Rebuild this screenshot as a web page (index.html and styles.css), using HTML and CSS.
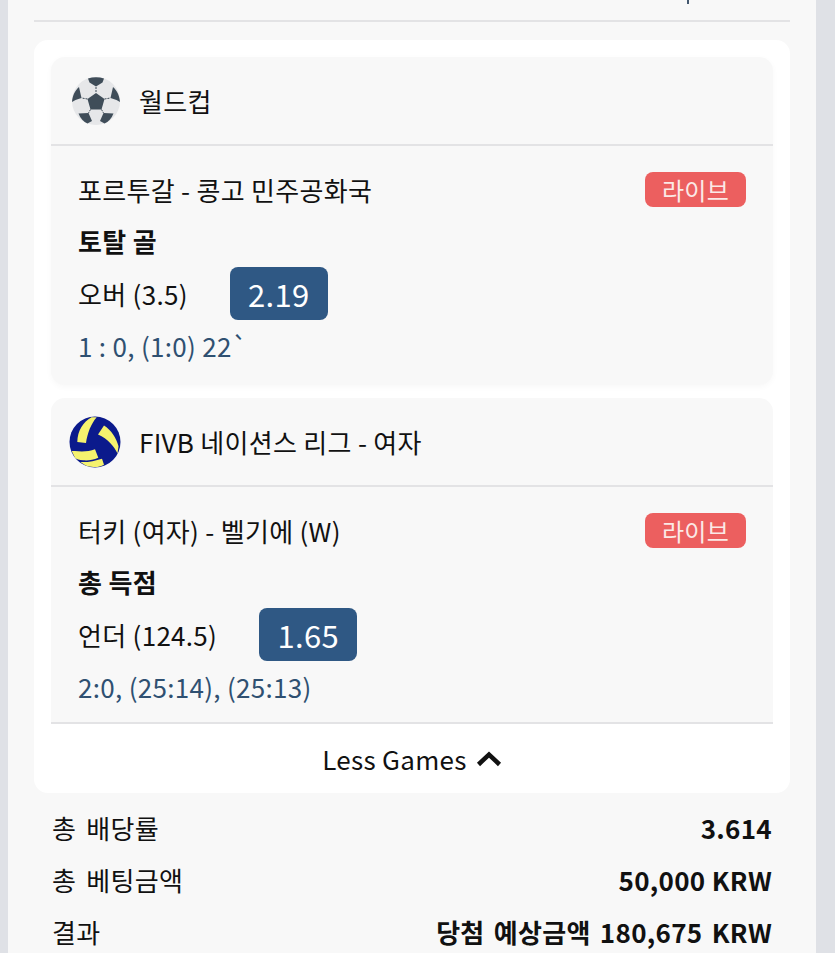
FILE: index.html
```html
<!DOCTYPE html>
<html>
<head>
  <title>Bet Slip</title>
  <link rel="stylesheet" href="styles.css">
</head>
<body>
  <div class="panel">
    <div class="topBar"><span class="topMark"></span></div>

    <div class="slipCard">
      <div class="game">
        <div class="gameHeader">
          <svg class="leagueIcon soccer" viewBox="0 0 48 48">
            <circle cx="24" cy="24" r="24" fill="#e6e7e9"/>
            <path d="M24 16 32.500 22 29.500 32.500H18.500L15.500 22Z" fill="#3f4d59"/>
            <path d="M16 1.500C21 -.2 27 -.2 32 1.500L30.500 5.500 24 9.500 17.500 5.500Z" fill="#3f4d59"/>
            <path d="M41 10C45.500 14 47.500 19 48 25L44.500 23 38.500 21Z" fill="#3f4d59"/>
            <path d="M7 10C2.500 14 .5 19 0 25L3.500 23 9.500 21Z" fill="#3f4d59"/>
            <path d="M6.500 36.500 16.500 36 20 44 15.500 46.500C11.500 45 8.500 41.500 6.500 36.500Z" fill="#3f4d59"/>
            <path d="M41.500 36.500 31.500 36 28 44 32.500 46.500C36.500 45 39.500 41.500 41.500 36.500Z" fill="#3f4d59"/>
            <path d="M24 10V16M32.500 22 38.500 21M15.500 22 9.500 21M18.500 32.500 16.500 36M29.500 32.500 31.500 36" stroke="#3f4d59" stroke-width="1" stroke-dasharray="2 1" fill="none"/>
          </svg>
          <span class="leagueName">월드컵</span>
        </div>
        <div class="gameBody">
          <div class="matchRow">
            <span class="matchName">포르투갈 - 콩고 민주공화국</span>
            <span class="liveBadge">라이브</span>
          </div>
          <div class="marketName">토탈 골</div>
          <div class="pickRow">
            <span>오버 (3.5)</span>
            <span class="oddsBox">2.19</span>
          </div>
          <div class="scoreLine">1 : 0, (1:0) 22`</div>
        </div>
      </div>

      <div class="game gameLast">
        <div class="gameHeader">
          <svg class="leagueIcon volley" viewBox="0 0 52 52">
            <circle cx="26" cy="26" r="25.500" fill="#0b1a8c"/>
            <path d="M22.500 1.300 27.700 1.300C22 8 18.500 17 17 27L8.300 26C8.500 15 14 6 22.500 1.300Z" fill="#f5f26e"/>
            <path d="M29 18.500 35 9.500C42 14 47.500 22 49.500 30.300L48.500 37.500C45 30 39 23 29 18.500Z" fill="#f5f26e"/>
            <path d="M2.700 35H6C13 36 20 35.500 26 33.300L29.300 41.700C24 44 19 44.800 14.300 44.300C10 44 7.500 43 6 41.700Z" fill="#f5f26e"/>
            <path d="M11.300 46C18 46.500 26 45 33 42.700L35 48.700C32 50.500 28 51.300 24.500 51C21.500 51 18.500 50.300 16.300 49.300Z" fill="#f5f26e"/>
          </svg>
          <span class="leagueName">FIVB 네이션스 리그 - 여자</span>
        </div>
        <div class="gameBody">
          <div class="matchRow">
            <span class="matchName">터키 (여자) - 벨기에 (W)</span>
            <span class="liveBadge">라이브</span>
          </div>
          <div class="marketName">총 득점</div>
          <div class="pickRow">
            <span>언더 (124.5)</span>
            <span class="oddsBox">1.65</span>
          </div>
          <div class="scoreLine">2:0, (25:14), (25:13)</div>
        </div>
      </div>

      <div class="lessGames">
        <span>Less Games</span>
        <svg class="chevron" viewBox="0 0 26 16">
          <path d="M2.500 13.500 13 3.500 23.500 13.500" stroke="#111" stroke-width="4.500" fill="none"/>
        </svg>
      </div>
    </div>

    <div class="summary">
      <div class="summaryRow"><span class="summaryLabel">총 배당률</span><b>3.614</b></div>
      <div class="summaryRow"><span class="summaryLabel">총 베팅금액</span><b>50,000 KRW</b></div>
      <div class="summaryRow"><span class="summaryLabel">결과</span><b class="payout">당첨 예상금액 180,675 KRW</b></div>
    </div>
  </div>
</body>
</html>
```

FILE: styles.css
```css
html,
body {
  height: 953px;
  overflow: hidden;
}

body {
  background-color: #dfe1e6;
  color: #111;
  font-family: "Noto Sans CJK KR", "Noto Sans", sans-serif;
  font-size: 26px;
  letter-spacing: 0.3px;
  margin: 0;
  padding: 0 19px 0 8px;
}

.panel {
  background-color: #f8f8f8;
  height: 953px;
  padding: 0 26px;
}

.topBar {
  border-bottom: 2px solid #e3e3e5;
  display: flex;
  height: 20px;
  padding-left: 653px;
}

.topMark {
  background-color: #44586f;
  height: 4px;
  width: 2px;
}

.slipCard {
  background-color: #fff;
  border-radius: 14px;
  margin-top: 18px;
  padding: 17px 17px 0;
}

.game {
  background-color: #f8f8f8;
  border-radius: 14px;
  box-shadow: 0 2px 6px rgba(0, 0, 0, 0.03);
  margin-bottom: 13px;
}

.gameLast {
  border-radius: 14px 14px 0 0;
  box-shadow: none;
  margin-bottom: 0;
}

.gameHeader {
  align-items: center;
  border-bottom: 2px solid #e3e3e5;
  display: flex;
  gap: 20px;
  height: 87px;
  padding-left: 20px;
}

.leagueIcon {
  flex: none;
  height: 48px;
  width: 48px;
}

.soccer {
  margin: 0 -1px 0 1px;
}

.volley {
  height: 52px;
  margin: 0 -2px 0 -2px;
  width: 52px;
}

.leagueName {
  line-height: 36px;
}

.gameBody {
  padding: 25px 27px 21px;
}

.gameLast .gameBody {
  padding-bottom: 17px;
}

.matchRow {
  align-items: center;
  display: flex;
  height: 36px;
  justify-content: space-between;
}

.liveBadge {
  background-color: #ec5f5f;
  border-radius: 8px;
  color: #fbe9e6;
  font-size: 24px;
  height: 35px;
  line-height: 35px;
  text-align: center;
  width: 101px;
}

.marketName {
  font-weight: 700;
  height: 36px;
  line-height: 36px;
  margin-top: 16px;
}

.pickRow {
  align-items: center;
  display: flex;
  gap: 42px;
  height: 53px;
  margin-top: 8px;
}

.oddsBox {
  background-color: #2f5884;
  border-radius: 8px;
  color: #fff;
  font-size: 31px;
  height: 53px;
  line-height: 53px;
  text-align: center;
  width: 98px;
}

.scoreLine {
  color: #2f5071;
  height: 36px;
  line-height: 36px;
  margin-top: 8px;
}

.lessGames {
  align-items: center;
  border-top: 2px solid #e3e3e5;
  display: flex;
  gap: 9px;
  height: 69px;
  justify-content: center;
}

.chevron {
  height: 16px;
  width: 26px;
}

.summary {
  display: flex;
  flex-direction: column;
  gap: 16px;
  margin-top: 17px;
  padding: 0 18px;
}

.summaryRow {
  display: flex;
  height: 36px;
  justify-content: space-between;
  line-height: 36px;
}

.summaryLabel {
  word-spacing: 4px;
}

.summaryRow b {
  font-weight: 700;
}

.summaryRow .payout {
  word-spacing: 3px;
}
```
